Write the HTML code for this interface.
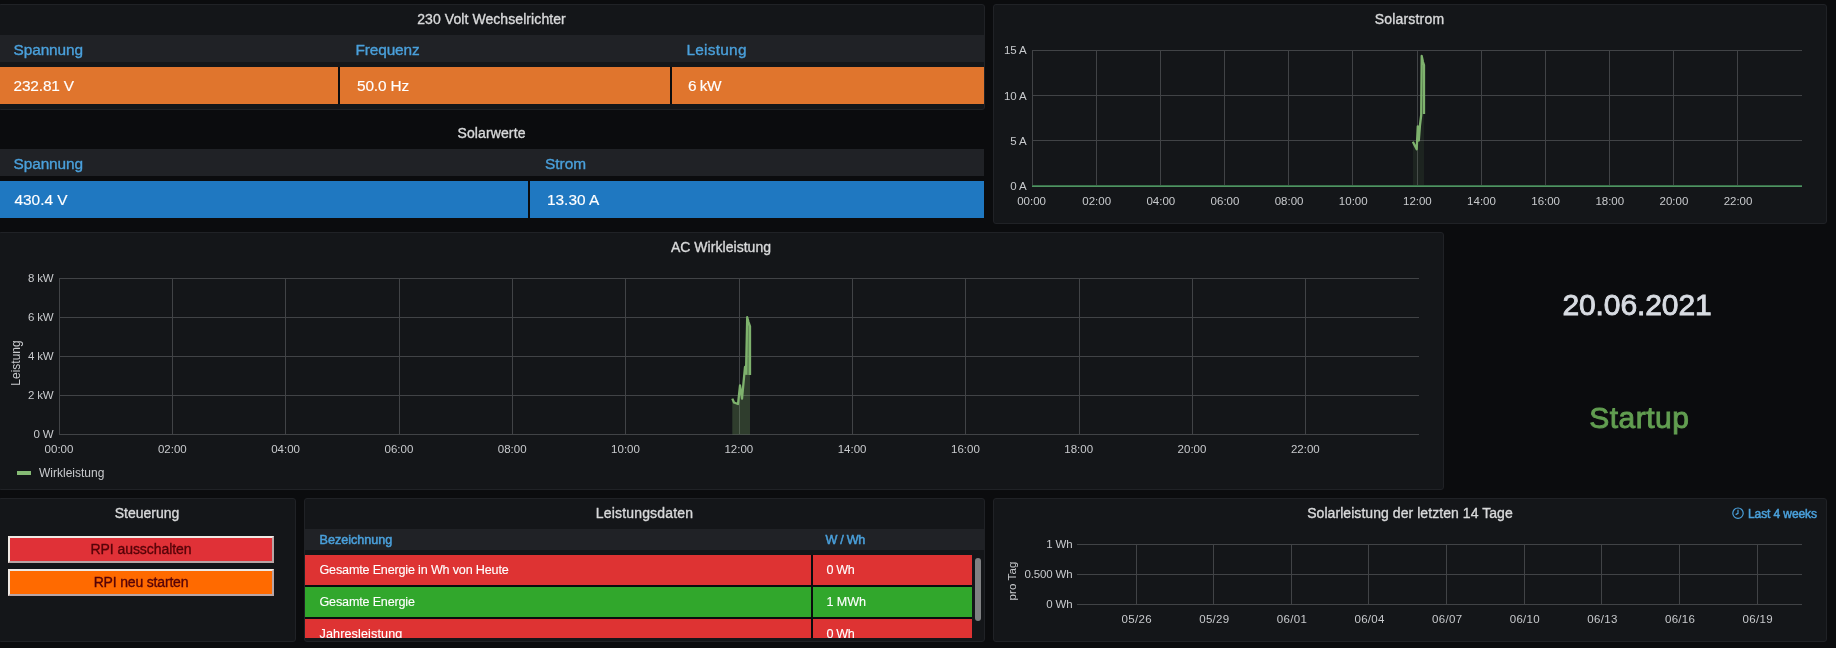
<!DOCTYPE html>
<html><head><meta charset="utf-8"><title>Solar Dashboard</title><style>
html,body{margin:0;padding:0;}
body{width:1836px;height:648px;overflow:hidden;background:#0b0c0e;font-family:"Liberation Sans",sans-serif;position:relative;}
#w{position:absolute;left:0;top:0;width:1836px;height:648px;overflow:hidden;will-change:transform;}
.p{position:absolute;background:#141619;border:1px solid #202226;border-radius:3px;}
.r{position:absolute;}
.t{position:absolute;white-space:nowrap;}
.s{position:absolute;overflow:visible;}
.clip{position:absolute;overflow:hidden;}
.b{position:absolute;box-sizing:border-box;width:266px;height:27px;border-style:solid;border-width:2px;border-color:#efe9e4 #b9a5a5 #b9a5a5 #efe9e4;color:#560308;-webkit-text-stroke:0.35px #560308;font-size:14px;line-height:23px;text-align:center;white-space:nowrap;}
</style></head><body><div id="w">
<div class="p" style="left:-2px;top:4px;width:985px;height:104px"></div>
<div class="p" style="left:993px;top:4px;width:832px;height:218px"></div>
<div class="p" style="left:-2px;top:232px;width:1444px;height:256px"></div>
<div class="p" style="left:-2px;top:498px;width:296px;height:142px"></div>
<div class="p" style="left:304px;top:498px;width:679px;height:142px"></div>
<div class="p" style="left:993px;top:498px;width:832px;height:142px"></div>
<div class="t" style="top:8.7px;font-size:14px;line-height:20px;color:#d8d9da;letter-spacing:0.08px;-webkit-text-stroke:0.35px #d8d9da;left:191.5px;width:600px;text-align:center;">230 Volt Wechselrichter</div>
<div class="t" style="top:122.7px;font-size:14px;line-height:20px;color:#d8d9da;letter-spacing:0.12px;-webkit-text-stroke:0.35px #d8d9da;left:191.5px;width:600px;text-align:center;">Solarwerte</div>
<div class="t" style="top:8.7px;font-size:14px;line-height:20px;color:#d8d9da;letter-spacing:0.19px;-webkit-text-stroke:0.35px #d8d9da;left:1109.5px;width:600px;text-align:center;">Solarstrom</div>
<div class="t" style="top:236.7px;font-size:14px;line-height:20px;color:#d8d9da;letter-spacing:0.04px;-webkit-text-stroke:0.35px #d8d9da;left:421px;width:600px;text-align:center;">AC Wirkleistung</div>
<div class="t" style="top:502.7px;font-size:14px;line-height:20px;color:#d8d9da;-webkit-text-stroke:0.35px #d8d9da;left:-153px;width:600px;text-align:center;">Steuerung</div>
<div class="t" style="top:502.7px;font-size:14px;line-height:20px;color:#d8d9da;letter-spacing:0.17px;-webkit-text-stroke:0.35px #d8d9da;left:344.5px;width:600px;text-align:center;">Leistungsdaten</div>
<div class="t" style="top:502.7px;font-size:14px;line-height:20px;color:#d8d9da;letter-spacing:0.06px;-webkit-text-stroke:0.35px #d8d9da;left:1110px;width:600px;text-align:center;">Solarleistung der letzten 14 Tage</div>
<div class="r" style="left:0px;top:35px;width:984px;height:27px;background:#202226;"></div>
<div class="r" style="left:0px;top:67px;width:984px;height:37px;background:#0b0c0e;"></div>
<div class="r" style="left:0px;top:67px;width:338px;height:37px;background:#e0752d;"></div>
<div class="r" style="left:340px;top:67px;width:330px;height:37px;background:#e0752d;"></div>
<div class="r" style="left:672px;top:67px;width:312px;height:37px;background:#e0752d;"></div>
<div class="t" style="top:39.5px;font-size:15.4px;line-height:20px;color:#4aa0db;letter-spacing:-0.08px;-webkit-text-stroke:0.35px #4aa0db;left:13.5px;">Spannung</div>
<div class="t" style="top:39.5px;font-size:15.4px;line-height:20px;color:#4aa0db;letter-spacing:-0.12px;-webkit-text-stroke:0.35px #4aa0db;left:355.5px;">Frequenz</div>
<div class="t" style="top:39.5px;font-size:15.4px;line-height:20px;color:#4aa0db;letter-spacing:0.25px;-webkit-text-stroke:0.35px #4aa0db;left:686.5px;">Leistung</div>
<div class="t" style="top:75.6px;font-size:15.4px;line-height:20px;color:#fff;letter-spacing:-0.14px;-webkit-text-stroke:0.15px #fff;left:13.5px;">232.81 V</div>
<div class="t" style="top:75.6px;font-size:15.4px;line-height:20px;color:#fff;letter-spacing:-0.15px;-webkit-text-stroke:0.15px #fff;left:357px;">50.0 Hz</div>
<div class="t" style="top:75.6px;font-size:15.4px;line-height:20px;color:#fff;letter-spacing:-0.5px;-webkit-text-stroke:0.15px #fff;left:688px;">6 kW</div>
<div class="r" style="left:0px;top:149px;width:984px;height:27px;background:#202226;"></div>
<div class="r" style="left:0px;top:181px;width:528px;height:37px;background:#1f78c1;"></div>
<div class="r" style="left:530px;top:181px;width:454px;height:37px;background:#1f78c1;"></div>
<div class="t" style="top:153.6px;font-size:15.4px;line-height:20px;color:#4aa0db;letter-spacing:-0.08px;-webkit-text-stroke:0.35px #4aa0db;left:13.5px;">Spannung</div>
<div class="t" style="top:153.6px;font-size:15.4px;line-height:20px;color:#4aa0db;-webkit-text-stroke:0.35px #4aa0db;left:545px;">Strom</div>
<div class="t" style="top:189.6px;font-size:15.4px;line-height:20px;color:#fff;-webkit-text-stroke:0.15px #fff;left:14.5px;">430.4 V</div>
<div class="t" style="top:189.6px;font-size:15.4px;line-height:20px;color:#fff;-webkit-text-stroke:0.15px #fff;left:547px;">13.30 A</div>
<div class="r" style="left:1032px;top:50px;width:770px;height:1px;background:#414346;"></div>
<div class="r" style="left:1032px;top:95px;width:770px;height:1px;background:#414346;"></div>
<div class="r" style="left:1032px;top:140px;width:770px;height:1px;background:#414346;"></div>
<div class="r" style="left:1032px;top:186px;width:770px;height:1px;background:#414346;"></div>
<div class="r" style="left:1032px;top:50px;width:1px;height:137px;background:#414346;"></div>
<div class="r" style="left:1096px;top:50px;width:1px;height:137px;background:#414346;"></div>
<div class="r" style="left:1160px;top:50px;width:1px;height:137px;background:#414346;"></div>
<div class="r" style="left:1224px;top:50px;width:1px;height:137px;background:#414346;"></div>
<div class="r" style="left:1288px;top:50px;width:1px;height:137px;background:#414346;"></div>
<div class="r" style="left:1352px;top:50px;width:1px;height:137px;background:#414346;"></div>
<div class="r" style="left:1417px;top:50px;width:1px;height:137px;background:#414346;"></div>
<div class="r" style="left:1481px;top:50px;width:1px;height:137px;background:#414346;"></div>
<div class="r" style="left:1545px;top:50px;width:1px;height:137px;background:#414346;"></div>
<div class="r" style="left:1609px;top:50px;width:1px;height:137px;background:#414346;"></div>
<div class="r" style="left:1673px;top:50px;width:1px;height:137px;background:#414346;"></div>
<div class="r" style="left:1737px;top:50px;width:1px;height:137px;background:#414346;"></div>
<div class="t" style="top:39.5px;font-size:11.5px;line-height:20px;color:#c8cacd;letter-spacing:-0.15px;left:426.5px;width:600px;text-align:right;">15 A</div>
<div class="t" style="top:85.5px;font-size:11.5px;line-height:20px;color:#c8cacd;letter-spacing:-0.15px;left:426.5px;width:600px;text-align:right;">10 A</div>
<div class="t" style="top:130.5px;font-size:11.5px;line-height:20px;color:#c8cacd;letter-spacing:-0.15px;left:426.5px;width:600px;text-align:right;">5 A</div>
<div class="t" style="top:175.5px;font-size:11.5px;line-height:20px;color:#c8cacd;letter-spacing:-0.15px;left:426.5px;width:600px;text-align:right;">0 A</div>
<div class="t" style="top:191.3px;font-size:11.5px;line-height:20px;color:#c8cacd;left:731.6px;width:600px;text-align:center;">00:00</div>
<div class="t" style="top:191.3px;font-size:11.5px;line-height:20px;color:#c8cacd;left:796.73px;width:600px;text-align:center;">02:00</div>
<div class="t" style="top:191.3px;font-size:11.5px;line-height:20px;color:#c8cacd;left:860.86px;width:600px;text-align:center;">04:00</div>
<div class="t" style="top:191.3px;font-size:11.5px;line-height:20px;color:#c8cacd;left:924.99px;width:600px;text-align:center;">06:00</div>
<div class="t" style="top:191.3px;font-size:11.5px;line-height:20px;color:#c8cacd;left:989.12px;width:600px;text-align:center;">08:00</div>
<div class="t" style="top:191.3px;font-size:11.5px;line-height:20px;color:#c8cacd;left:1053.25px;width:600px;text-align:center;">10:00</div>
<div class="t" style="top:191.3px;font-size:11.5px;line-height:20px;color:#c8cacd;left:1117.38px;width:600px;text-align:center;">12:00</div>
<div class="t" style="top:191.3px;font-size:11.5px;line-height:20px;color:#c8cacd;left:1181.51px;width:600px;text-align:center;">14:00</div>
<div class="t" style="top:191.3px;font-size:11.5px;line-height:20px;color:#c8cacd;left:1245.64px;width:600px;text-align:center;">16:00</div>
<div class="t" style="top:191.3px;font-size:11.5px;line-height:20px;color:#c8cacd;left:1309.77px;width:600px;text-align:center;">18:00</div>
<div class="t" style="top:191.3px;font-size:11.5px;line-height:20px;color:#c8cacd;left:1373.9px;width:600px;text-align:center;">20:00</div>
<div class="t" style="top:191.3px;font-size:11.5px;line-height:20px;color:#c8cacd;left:1438.03px;width:600px;text-align:center;">22:00</div>
<svg class="s" style="left:1000px;top:40px" width="820" height="160" viewBox="1000 40 820 160">
<path d="M1412.9 141.7 L1415 146 L1416.7 149.3 L1417.8 126.4 L1418.8 140.5 L1420 125 L1421.2 115 L1421.4 90 L1421.7 56 L1423 62 L1424 65 L1424 114 L1424 186 L1412.9 186 Z" fill="#7eb26d" fill-opacity="0.09"/>
<rect x="1032" y="185" width="770" height="1" fill="#3a6f4a"/><rect x="1032" y="186" width="770" height="1" fill="#4f9462"/>
<path d="M1412.9 141.7 L1415 146 L1416.7 149.3 L1417.8 126.4 L1418.8 140.5 L1420 125 L1421.2 115 L1421.4 90 L1421.7 56 L1423 62 L1424 65 L1424 114" stroke="#7eb26d" stroke-width="2.3" fill="none" stroke-linejoin="round"/>
</svg>
<div class="r" style="left:59px;top:278px;width:1360px;height:1px;background:#414346;"></div>
<div class="r" style="left:59px;top:317px;width:1360px;height:1px;background:#414346;"></div>
<div class="r" style="left:59px;top:356px;width:1360px;height:1px;background:#414346;"></div>
<div class="r" style="left:59px;top:395px;width:1360px;height:1px;background:#414346;"></div>
<div class="r" style="left:59px;top:434px;width:1360px;height:1px;background:#414346;"></div>
<div class="r" style="left:59px;top:278px;width:1px;height:157px;background:#414346;"></div>
<div class="r" style="left:172px;top:278px;width:1px;height:157px;background:#414346;"></div>
<div class="r" style="left:285px;top:278px;width:1px;height:157px;background:#414346;"></div>
<div class="r" style="left:399px;top:278px;width:1px;height:157px;background:#414346;"></div>
<div class="r" style="left:512px;top:278px;width:1px;height:157px;background:#414346;"></div>
<div class="r" style="left:625px;top:278px;width:1px;height:157px;background:#414346;"></div>
<div class="r" style="left:739px;top:278px;width:1px;height:157px;background:#414346;"></div>
<div class="r" style="left:852px;top:278px;width:1px;height:157px;background:#414346;"></div>
<div class="r" style="left:965px;top:278px;width:1px;height:157px;background:#414346;"></div>
<div class="r" style="left:1079px;top:278px;width:1px;height:157px;background:#414346;"></div>
<div class="r" style="left:1192px;top:278px;width:1px;height:157px;background:#414346;"></div>
<div class="r" style="left:1305px;top:278px;width:1px;height:157px;background:#414346;"></div>
<div class="t" style="top:268.0px;font-size:11.5px;line-height:20px;color:#c8cacd;letter-spacing:-0.15px;left:-546.5px;width:600px;text-align:right;">8 kW</div>
<div class="t" style="top:307.0px;font-size:11.5px;line-height:20px;color:#c8cacd;letter-spacing:-0.15px;left:-546.5px;width:600px;text-align:right;">6 kW</div>
<div class="t" style="top:346.0px;font-size:11.5px;line-height:20px;color:#c8cacd;letter-spacing:-0.15px;left:-546.5px;width:600px;text-align:right;">4 kW</div>
<div class="t" style="top:385.0px;font-size:11.5px;line-height:20px;color:#c8cacd;letter-spacing:-0.15px;left:-546.5px;width:600px;text-align:right;">2 kW</div>
<div class="t" style="top:424.0px;font-size:11.5px;line-height:20px;color:#c8cacd;letter-spacing:-0.15px;left:-546.5px;width:600px;text-align:right;">0 W</div>
<div class="t" style="top:439.3px;font-size:11.5px;line-height:20px;color:#c8cacd;left:-241.0px;width:600px;text-align:center;">00:00</div>
<div class="t" style="top:439.3px;font-size:11.5px;line-height:20px;color:#c8cacd;left:-127.7px;width:600px;text-align:center;">02:00</div>
<div class="t" style="top:439.3px;font-size:11.5px;line-height:20px;color:#c8cacd;left:-14.4px;width:600px;text-align:center;">04:00</div>
<div class="t" style="top:439.3px;font-size:11.5px;line-height:20px;color:#c8cacd;left:98.9px;width:600px;text-align:center;">06:00</div>
<div class="t" style="top:439.3px;font-size:11.5px;line-height:20px;color:#c8cacd;left:212.2px;width:600px;text-align:center;">08:00</div>
<div class="t" style="top:439.3px;font-size:11.5px;line-height:20px;color:#c8cacd;left:325.5px;width:600px;text-align:center;">10:00</div>
<div class="t" style="top:439.3px;font-size:11.5px;line-height:20px;color:#c8cacd;left:438.8px;width:600px;text-align:center;">12:00</div>
<div class="t" style="top:439.3px;font-size:11.5px;line-height:20px;color:#c8cacd;left:552.1px;width:600px;text-align:center;">14:00</div>
<div class="t" style="top:439.3px;font-size:11.5px;line-height:20px;color:#c8cacd;left:665.4px;width:600px;text-align:center;">16:00</div>
<div class="t" style="top:439.3px;font-size:11.5px;line-height:20px;color:#c8cacd;left:778.7px;width:600px;text-align:center;">18:00</div>
<div class="t" style="top:439.3px;font-size:11.5px;line-height:20px;color:#c8cacd;left:892.0px;width:600px;text-align:center;">20:00</div>
<div class="t" style="top:439.3px;font-size:11.5px;line-height:20px;color:#c8cacd;left:1005.3px;width:600px;text-align:center;">22:00</div>
<svg class="s" style="left:700px;top:270px" width="100" height="170" viewBox="700 270 100 170">
<path d="M732.3 398.6 L734 402.5 L738 404 L740 385.5 L742 398.6 L745 367 L746 373.7 L747.2 317.2 L748.5 322 L750 326.4 L750 375 L750 434.5 L732.3 434.5 Z" fill="#7eb26d" fill-opacity="0.25"/>
<path d="M745.6 375 L747.2 318 L750 326.4 L750 375 Z" fill="#7eb26d" fill-opacity="0.6"/>
<path d="M732.3 398.6 L734 402.5 L738 404 L740 385.5 L742 398.6 L745 367 L746 373.7 L747.2 317.2 L748.5 322 L750 326.4 L750 375" stroke="#7eb26d" stroke-width="2.3" fill="none" stroke-linejoin="round"/>
</svg>
<div class="t" style="left:-34px;top:352.5px;width:100px;text-align:center;font-size:12px;line-height:20px;color:#c8cacd;transform:rotate(-90deg);letter-spacing:0px">Leistung</div>
<div class="r" style="left:17px;top:471px;width:14px;height:4px;background:#86bb75;"></div>
<div class="t" style="top:462.6px;font-size:12px;line-height:20px;color:#c8cacd;left:39px;">Wirkleistung</div>
<div class="t" style="top:294.6px;font-size:30px;line-height:20px;color:#d8dce2;letter-spacing:-0.1px;-webkit-text-stroke:0.9px #d8dce2;left:1337px;width:600px;text-align:center;height:40px;line-height:40px;margin-top:-10px;">20.06.2021</div>
<div class="t" style="top:408.4px;font-size:30px;line-height:20px;color:#629e51;letter-spacing:0.5px;-webkit-text-stroke:0.9px #629e51;left:1339.3px;width:600px;text-align:center;height:40px;line-height:40px;margin-top:-10px;">Startup</div>
<div class="b" style="left:8px;top:536px;background:#e03137;letter-spacing:-0.05px">RPI ausschalten</div>
<div class="b" style="left:8px;top:569px;background:#ff6a00;letter-spacing:-0.17px">RPI neu starten</div>
<div class="r" style="left:305px;top:529px;width:679px;height:21px;background:#202226;"></div>
<div class="t" style="top:529.6px;font-size:12.6px;line-height:20px;color:#4aa0db;-webkit-text-stroke:0.5px #4aa0db;left:319.5px;">Bezeichnung</div>
<div class="t" style="top:529.6px;font-size:12.6px;line-height:20px;color:#4aa0db;letter-spacing:-0.3px;-webkit-text-stroke:0.5px #4aa0db;left:825.5px;">W / Wh</div>
<div class="r" style="left:305px;top:555px;width:667px;height:83px;background:#0b0c0e;"></div>
<div class="r" style="left:305px;top:555px;width:506px;height:30px;background:#de3333;"></div>
<div class="r" style="left:813px;top:555px;width:159px;height:30px;background:#de3333;"></div>
<div class="r" style="left:305px;top:587px;width:506px;height:30px;background:#31a72c;"></div>
<div class="r" style="left:813px;top:587px;width:159px;height:30px;background:#31a72c;"></div>
<div class="r" style="left:305px;top:619px;width:506px;height:19px;background:#de3333;"></div>
<div class="r" style="left:813px;top:619px;width:159px;height:19px;background:#de3333;"></div>
<div class="clip" style="left:305px;top:550px;width:679px;height:88px">
<div class="t" style="left:14.5px;top:10px;font-size:12.6px;line-height:20px;color:#fff;-webkit-text-stroke:0.12px #fff;letter-spacing:-0.18px">Gesamte Energie in Wh von Heute</div>
<div class="t" style="left:521.5px;top:10px;font-size:12.6px;line-height:20px;color:#fff;-webkit-text-stroke:0.12px #fff;letter-spacing:-0.4px">0 Wh</div>
<div class="t" style="left:14.5px;top:42px;font-size:12.6px;line-height:20px;color:#fff;-webkit-text-stroke:0.12px #fff;letter-spacing:-0.18px">Gesamte Energie</div>
<div class="t" style="left:521.5px;top:42px;font-size:12.6px;line-height:20px;color:#fff;-webkit-text-stroke:0.12px #fff;letter-spacing:-0.1px">1 MWh</div>
<div class="t" style="left:14.5px;top:74px;font-size:12.6px;line-height:20px;color:#fff;-webkit-text-stroke:0.12px #fff;letter-spacing:0.12px">Jahresleistung</div>
<div class="t" style="left:521.5px;top:74px;font-size:12.6px;line-height:20px;color:#fff;-webkit-text-stroke:0.12px #fff;letter-spacing:-0.4px">0 Wh</div>
</div>
<div class="r" style="left:975px;top:558px;width:6px;height:63px;background:#7f8082;border-radius:3px;"></div>
<div class="r" style="left:1077px;top:544px;width:724.5px;height:1px;background:#414346;"></div>
<div class="r" style="left:1077px;top:574px;width:724.5px;height:1px;background:#414346;"></div>
<div class="r" style="left:1077px;top:604px;width:724.5px;height:1px;background:#414346;"></div>
<div class="r" style="left:1136px;top:544px;width:1px;height:61px;background:#414346;"></div>
<div class="r" style="left:1213px;top:544px;width:1px;height:61px;background:#414346;"></div>
<div class="r" style="left:1291px;top:544px;width:1px;height:61px;background:#414346;"></div>
<div class="r" style="left:1368px;top:544px;width:1px;height:61px;background:#414346;"></div>
<div class="r" style="left:1446px;top:544px;width:1px;height:61px;background:#414346;"></div>
<div class="r" style="left:1524px;top:544px;width:1px;height:61px;background:#414346;"></div>
<div class="r" style="left:1601px;top:544px;width:1px;height:61px;background:#414346;"></div>
<div class="r" style="left:1679px;top:544px;width:1px;height:61px;background:#414346;"></div>
<div class="r" style="left:1757px;top:544px;width:1px;height:61px;background:#414346;"></div>
<div class="t" style="top:533.5px;font-size:11.5px;line-height:20px;color:#c8cacd;letter-spacing:-0.15px;left:472.5px;width:600px;text-align:right;">1 Wh</div>
<div class="t" style="top:563.5px;font-size:11.5px;line-height:20px;color:#c8cacd;letter-spacing:-0.15px;left:472.5px;width:600px;text-align:right;">0.500 Wh</div>
<div class="t" style="top:593.5px;font-size:11.5px;line-height:20px;color:#c8cacd;letter-spacing:-0.15px;left:472.5px;width:600px;text-align:right;">0 Wh</div>
<div class="t" style="top:609.3px;font-size:11.5px;line-height:20px;color:#c8cacd;letter-spacing:0.3px;left:836.7px;width:600px;text-align:center;">05/26</div>
<div class="t" style="top:609.3px;font-size:11.5px;line-height:20px;color:#c8cacd;letter-spacing:0.3px;left:914.33px;width:600px;text-align:center;">05/29</div>
<div class="t" style="top:609.3px;font-size:11.5px;line-height:20px;color:#c8cacd;letter-spacing:0.3px;left:991.95px;width:600px;text-align:center;">06/01</div>
<div class="t" style="top:609.3px;font-size:11.5px;line-height:20px;color:#c8cacd;letter-spacing:0.3px;left:1069.58px;width:600px;text-align:center;">06/04</div>
<div class="t" style="top:609.3px;font-size:11.5px;line-height:20px;color:#c8cacd;letter-spacing:0.3px;left:1147.2px;width:600px;text-align:center;">06/07</div>
<div class="t" style="top:609.3px;font-size:11.5px;line-height:20px;color:#c8cacd;letter-spacing:0.3px;left:1224.83px;width:600px;text-align:center;">06/10</div>
<div class="t" style="top:609.3px;font-size:11.5px;line-height:20px;color:#c8cacd;letter-spacing:0.3px;left:1302.45px;width:600px;text-align:center;">06/13</div>
<div class="t" style="top:609.3px;font-size:11.5px;line-height:20px;color:#c8cacd;letter-spacing:0.3px;left:1380.08px;width:600px;text-align:center;">06/16</div>
<div class="t" style="top:609.3px;font-size:11.5px;line-height:20px;color:#c8cacd;letter-spacing:0.3px;left:1457.7px;width:600px;text-align:center;">06/19</div>
<div class="t" style="left:962px;top:571px;width:100px;text-align:center;font-size:11.5px;line-height:20px;color:#c8cacd;transform:rotate(-90deg);letter-spacing:0.1px">pro Tag</div>
<svg class="s" style="left:1731px;top:506px" width="14" height="14" viewBox="0 0 14 14"><circle cx="7" cy="7.2" r="5.2" fill="none" stroke="#4aa0db" stroke-width="1.2"/><path d="M7 3.8 V7.4 L4.6 8.6" fill="none" stroke="#4aa0db" stroke-width="1.2"/></svg>
<div class="t" style="top:503.7px;font-size:12px;line-height:20px;color:#4aa0db;letter-spacing:-0.1px;-webkit-text-stroke:0.5px #4aa0db;left:1748px;">Last 4 weeks</div>
</div></body></html>
